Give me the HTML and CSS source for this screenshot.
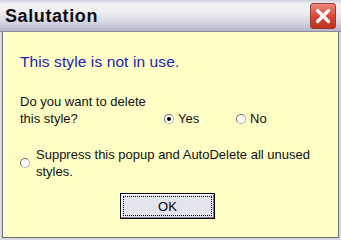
FILE: index.html
```html
<!DOCTYPE html>
<html>
<head>
<meta charset="utf-8">
<link rel="stylesheet" href="styles.css">
</head>
<body>
<div class="window">
  <div class="titlebar">
    <span class="title">Salutation</span>
    <span class="close">
      <svg width="24" height="24" viewBox="0 0 24 24"><path d="M6.5 6.5 L17.5 17.5 M17.5 6.5 L6.5 17.5" stroke="#fff" stroke-width="3.2" stroke-linecap="round"/></svg>
    </span>
  </div>
  <div class="content">
    <p class="headline">This style is not in use.</p>
    <div class="question">
      <div class="qtext">Do you want to delete this style?</div>
      <label class="opt"><span class="radio checked"></span>Yes</label>
      <label class="opt"><span class="radio"></span>No</label>
    </div>
    <div class="suppress">
      <span class="radio"></span>
      <div class="stext">Suppress this popup and AutoDelete all unused styles.</div>
    </div>
    <div class="actions">
      <button class="ok"><span class="focus">OK</span></button>
    </div>
  </div>
</div>
</body>
</html>
```
FILE: styles.css
```css
html, body { margin: 0; padding: 0; background: #ffffff; }
body { width: 341px; height: 240px; overflow: hidden; font-family: "Liberation Sans", Arial, sans-serif; }
.window { width: 341px; height: 240px; display: flex; flex-direction: column; background: #d8d8e0; }
.titlebar {
  height: 31px; flex: none; display: flex; align-items: center; justify-content: space-between;
  padding: 0 5px 0 5px;
  background: linear-gradient(#cfd0dc 0px, #f2f2f6 4px, #eeeef3 12px, #d6d7e2 22px, #b4b5c8 31px);
  border-radius: 5px 5px 0 0;
  border-bottom: 1px solid #8c8ca0;
}
.title { font-weight: bold; font-size: 18px; color: #101010; margin-top: 2px; letter-spacing: 0.6px; }
.close {
  width: 24px; height: 24px; border-radius: 3px; margin-top: 1px;
  background: linear-gradient(#f08a7a, #d8483a 50%, #c03020);
  border: 1px solid #9a3a30; display: flex;
}
.content {
  flex: 1; margin: 0 2px 2px 2px; background: #ffffc6;
  border-left: 1px solid #6e6e6e; border-right: 1px solid #6e6e6e; border-bottom: 1px solid #6e6e6e;
  padding: 0 0 0 17px; display: flex; flex-direction: column;
  font-size: 13px; color: #111;
}
.headline { margin: 21px 0 0 0; font-size: 15.5px; color: #2222b8; letter-spacing: 0.1px; }
.question { display: flex; align-items: flex-end; margin-top: 22px; }
.qtext { width: 144px; line-height: 17px; }
.opt { display: flex; align-items: center; gap: 4px; line-height: 17px; width: 72px; }
.radio {
  width: 10px; height: 10px; border-radius: 50%; flex: none; box-sizing: border-box;
  background: #fff; border: 1px solid #b0b0b0; border-top-color: #707070; border-left-color: #707070;
  display: inline-flex; align-items: center; justify-content: center;
}
.radio.checked::after { content: ""; width: 4px; height: 4px; border-radius: 50%; background: #000; }
.suppress { display: flex; align-items: center; gap: 6px; margin-top: 19px; }
.stext { width: 280px; line-height: 17px; }
.actions { display: flex; justify-content: center; margin-top: 13px; padding-right: 23px; }
.ok {
  width: 95px; height: 26px; padding: 2px; box-sizing: border-box;
  background: #e4e4ec; border: 1px solid #000; box-shadow: inset -1px -1px 0 #808080, inset 1px 1px 0 #fff;
  font-family: "Liberation Sans", Arial, sans-serif; font-size: 13px; color: #000;
}
.focus { display: flex; align-items: center; justify-content: center; height: 100%; border: 1px dotted #000; box-sizing: border-box; }
```
